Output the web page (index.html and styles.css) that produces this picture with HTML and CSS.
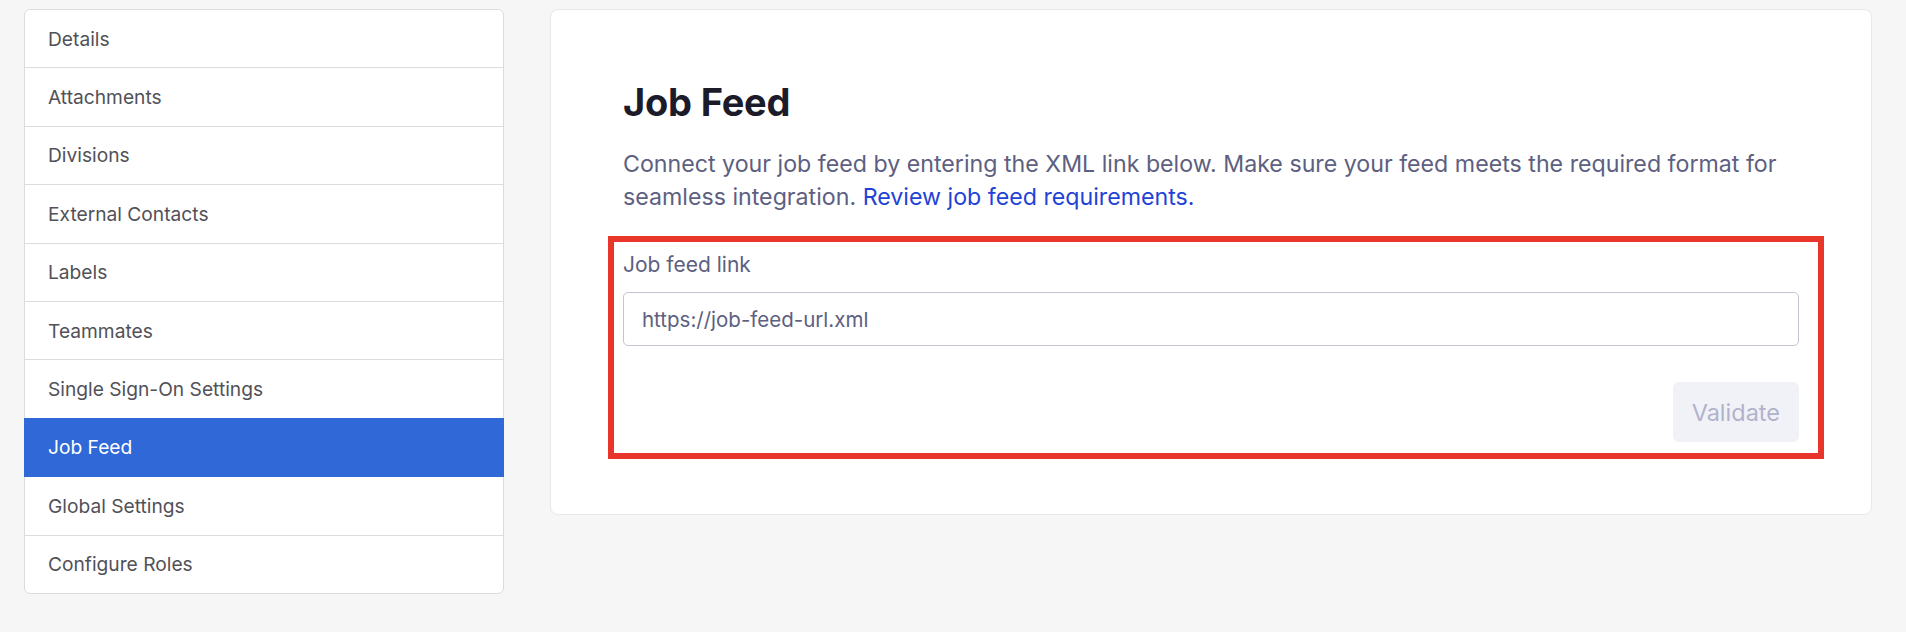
FILE: index.html
```html
<!DOCTYPE html>
<html lang="en">
<head>
<meta charset="utf-8">
<title>Job Feed</title>
<link rel="stylesheet" href="styles.css">
</head>
<body>
<div class="page">
  <nav class="sidebar">
    <a class="nav-item">Details</a>
    <a class="nav-item">Attachments</a>
    <a class="nav-item">Divisions</a>
    <a class="nav-item">External Contacts</a>
    <a class="nav-item">Labels</a>
    <a class="nav-item">Teammates</a>
    <a class="nav-item">Single Sign-On Settings</a>
    <a class="nav-item active">Job Feed</a>
    <a class="nav-item">Global Settings</a>
    <a class="nav-item">Configure Roles</a>
  </nav>
  <main class="card">
    <h1 class="title">Job Feed</h1>
    <p class="intro">Connect your job feed by entering the XML link below. Make sure your feed meets the required format for seamless integration. <a class="link">Review job feed requirements.</a></p>
    <div class="form">
      <label class="label">Job feed link</label>
      <div class="input">https://job-feed-url.xml</div>
      <div class="actions">
        <button class="btn">Validate</button>
      </div>
    </div>
  </main>
</div>
</body>
</html>
```

FILE: styles.css
```css
* { box-sizing: border-box; }
html, body { margin: 0; }
body {
  background: #f6f6f7;
  font-family: Inter, "Noto Sans", sans-serif;
}
.page {
  display: flex;
  align-items: flex-start;
  gap: 46px;
  padding: 9px 34px 0 24px;
}
.sidebar {
  width: 480px;
  flex: none;
  display: flex;
  flex-direction: column;
  background: #fff;
  border: 1px solid #dcdcde;
  border-radius: 6px;
}
.nav-item {
  box-sizing: content-box;
  display: flex;
  align-items: center;
  height: 57.4px;
  padding-left: 23px;
  font-size: 19.2px;
  color: #515157;
  border-top: 1px solid #dcdcde;
}
.nav-item:first-child { border-top: none; }
.nav-item.active {
  position: relative;
  margin: 0 -1px;
  padding-left: 24px;
  background: #3168d8;
  border-top-color: #3168d8;
  box-shadow: 0 1px 0 #3168d8;
  color: #fff;
}
.card {
  flex: 1;
  background: #fff;
  border: 1px solid #e7e7ee;
  border-radius: 8px;
  padding: 72px;
}
.title {
  margin: 0;
  font-size: 38px;
  line-height: 40px;
  font-weight: 700;
  color: #1b1b29;
  letter-spacing: -0.2px;
}
.intro {
  margin: 26px 0 0;
  font-size: 23.2px;
  line-height: 33px;
  color: #5d6080;
}
.link { color: #1f43d6; }
.form {
  position: relative;
  margin-top: 37px;
}
.form::after {
  content: "";
  position: absolute;
  top: -15px;
  left: -15px;
  right: -25px;
  bottom: -17px;
  border: 6px solid #e8362a;
  pointer-events: none;
}
.label {
  display: block;
  font-size: 21px;
  line-height: 28px;
  font-weight: 400;
  color: #5d6080;
}
.input {
  margin-top: 13px;
  height: 54px;
  display: flex;
  align-items: center;
  padding: 0 18px;
  border: 1px solid #c3c3d6;
  border-radius: 5px;
  font-size: 20.5px;
  color: #5d6080;
}
.actions {
  display: flex;
  justify-content: flex-end;
  margin-top: 36px;
}
.btn {
  height: 60px;
  padding: 0 19px;
  border: none;
  border-radius: 6px;
  background: #f1f2f8;
  color: #b1b3cc;
  font-family: inherit;
  font-size: 23.5px;
}
```
